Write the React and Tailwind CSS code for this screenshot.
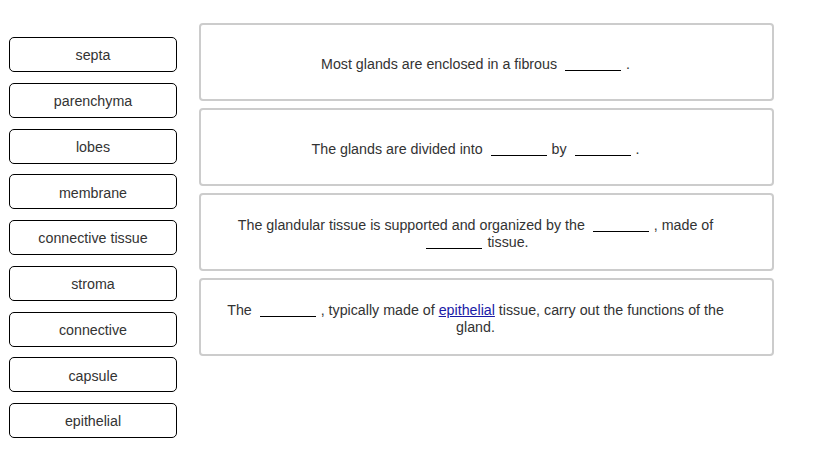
import React from 'react';

const words = ['septa', 'parenchyma', 'lobes', 'membrane', 'connective tissue', 'stroma', 'connective', 'capsule', 'epithelial'];

const Blank = () => (
  <span className="inline-block w-[56px] h-[13px] border-b border-black ml-[4px] mr-[1px] align-[-2px]"></span>
);

const Row = ({ children, single }) => (
  <div className={`h-[78px] flex items-center justify-center text-center border-2 border-[#ccc] rounded-[4px] pl-[23px] pr-[45px] leading-[17px] ${single ? 'pt-[5px]' : 'pt-[3px]'}`}>
    <p>{children}</p>
  </div>
);

const App = () => {
  return (
    <div className="w-[819px] h-[457px] bg-white flex gap-[22px] pl-[9px] pt-[23px] font-['Liberation_Sans',Arial,sans-serif] text-[14.25px] text-[#333]">
      <div className="flex flex-col gap-[10.75px] w-[168px] pt-[14px]">
        {words.map((w) => (
          <div key={w} className="h-[35px] flex items-center justify-center pt-[3px] border border-black rounded-[5px] bg-white">
            {w}
          </div>
        ))}
      </div>
      <div className="flex flex-col gap-[7px] w-[575px]">
        <Row single>
          Most glands are enclosed in a fibrous <Blank /> .
        </Row>
        <Row single>
          The glands are divided into <Blank /> by <Blank /> .
        </Row>
        <Row>
          The glandular tissue is supported and organized by the <Blank /> , made of <Blank /> tissue.
        </Row>
        <Row>
          The <Blank /> , typically made of <a className="text-[#1a1aa6] underline" href="#">epithelial</a> tissue, carry out the functions of the gland.
        </Row>
      </div>
    </div>
  );
};

export default App;
